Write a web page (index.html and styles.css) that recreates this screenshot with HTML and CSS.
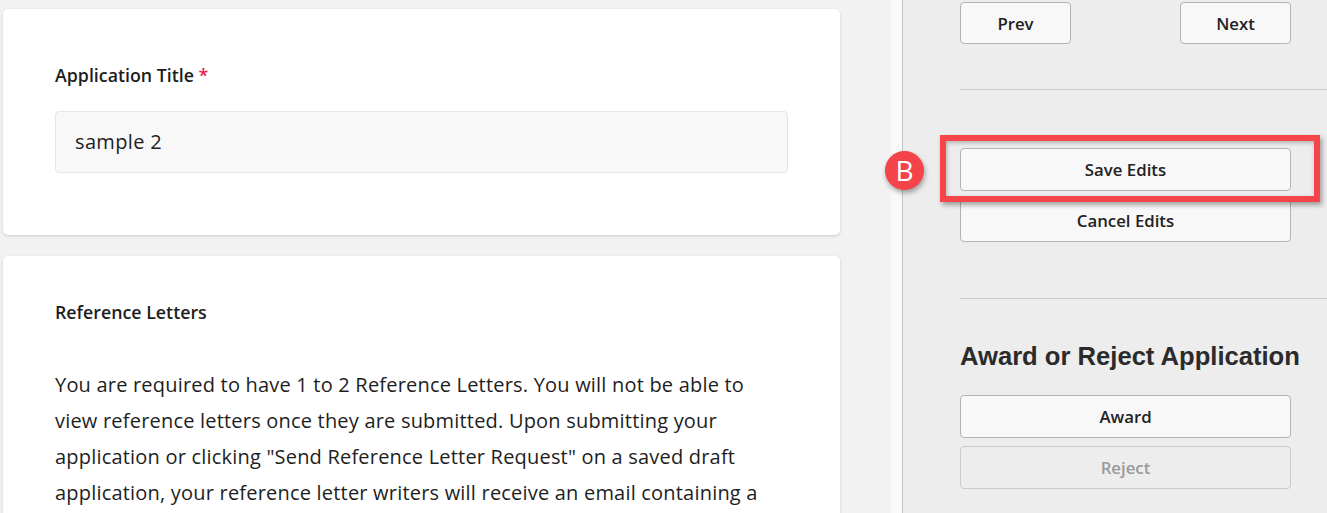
FILE: index.html
```html
<!DOCTYPE html>
<html lang="en">
<head>
<meta charset="utf-8">
<title>Application</title>
<link rel="stylesheet" href="styles.css">
</head>
<body>
<div class="page">
  <main class="main">
    <section class="card card-title">
      <label class="field-label">Application Title <span class="req">*</span></label>
      <div class="input">sample 2</div>
    </section>
    <section class="card card-refs">
      <h3 class="field-label">Reference Letters</h3>
      <p class="para">You are required to have 1 to 2 Reference Letters. You will not be able to view reference letters once they are submitted. Upon submitting your application or clicking "Send Reference Letter Request" on a saved draft application, your reference letter writers will receive an email containing a link to submit their letter.</p>
    </section>
  </main>
  <div class="strip"></div>
  <aside class="sidebar">
    <div class="nav-row">
      <button class="btn btn-small">Prev</button>
      <button class="btn btn-small">Next</button>
    </div>
    <hr class="rule rule-1">
    <div class="stack stack-edit">
      <div class="highlight-wrap">
        <button class="btn">Save Edits</button>
        <span class="callout-box"></span>
        <span class="badge">B</span>
      </div>
      <button class="btn">Cancel Edits</button>
    </div>
    <hr class="rule rule-2">
    <h2 class="side-heading">Award or Reject Application</h2>
    <div class="stack">
      <button class="btn">Award</button>
      <button class="btn btn-disabled">Reject</button>
    </div>
  </aside>
</div>
</body>
</html>
```
FILE: styles.css
```css
* { box-sizing: border-box; }
html, body { margin: 0; padding: 0; }
body {
  background: #f2f2f2;
  font-family: "Open Sans", "Liberation Sans", sans-serif;
  color: #222;
  overflow: hidden;
  height: 513px;
}
.page {
  display: flex;
  align-items: flex-start;
  height: 513px;
}
.main {
  width: 837px;
  margin-left: 3px;
  padding-top: 9px;
  flex: none;
  display: flex;
  flex-direction: column;
  gap: 21px;
}
.card {
  background: #fff;
  border-radius: 5px;
  box-shadow: 0 1px 3px rgba(0,0,0,0.16);
  padding: 0 52px;
}
.card-title { padding-top: 54px; padding-bottom: 62px; }
.card-refs { padding-top: 44px; padding-bottom: 40px; }
.field-label {
  display: block;
  margin: 0;
  font-size: 17.8px;
  line-height: 24px;
  font-weight: 600;
  color: #1d1d1d;
}
.req { color: #e31c4f; }
.input {
  margin-top: 24px;
  height: 62px;
  background: #f8f8f8;
  border: 1px solid #e6e6e6;
  border-radius: 4px;
  display: flex;
  align-items: center;
  padding-left: 19px;
  font-size: 20px;
  letter-spacing: 0.35px;
  line-height: 28px;
  color: #1e1e1e;
}
.para {
  margin: 43px 0 0;
  font-size: 20px;
  letter-spacing: 0.2px;
  line-height: 36px;
  color: #1e1e1e;
}
.strip {
  flex: none;
  width: 11px;
  height: 513px;
  margin-left: 51px;
  background: #f9f9f9;
}
.sidebar {
  flex: 1;
  height: 513px;
  background: #ededed;
  border-left: 1px solid #c4c4c4;
  padding-left: 57px;
  padding-top: 2px;
}
.btn {
  display: flex;
  align-items: center;
  justify-content: center;
  width: 331px;
  height: 43px;
  background: #f8f8f8;
  border: 1px solid #b3b3b3;
  border-radius: 4px;
  font-family: "Open Sans", "Liberation Sans", sans-serif;
  font-size: 16.8px;
  font-weight: 600;
  color: #222;
  padding: 0;
}
.btn-small { width: 111px; height: 42px; }
.btn-disabled { background: #ededed; color: #999; border-color: #cacaca; }
.nav-row {
  display: flex;
  justify-content: space-between;
  width: 331px;
}
.rule {
  border: 0;
  border-top: 1px solid #c8c8c8;
  margin: 0;
}
.rule-1 { margin-top: 45px; }
.rule-2 { margin-top: 56px; }
.stack {
  display: flex;
  flex-direction: column;
  gap: 8px;
}
.stack-edit { margin-top: 58px; }
.highlight-wrap { position: relative; width: 331px; }
.callout-box {
  position: absolute;
  left: -20px;
  top: -13px;
  width: 380px;
  height: 67px;
  border: 6px solid #f6454a;
  box-shadow: 2px 3px 5px rgba(0,0,0,0.35), inset 1px 2px 4px rgba(0,0,0,0.25);
  pointer-events: none;
}
.badge {
  position: absolute;
  left: -75px;
  top: 3px;
  width: 39px;
  height: 39px;
  border-radius: 50%;
  background: #f5434a;
  color: #fff;
  font-family: "Open Sans", "Liberation Sans", sans-serif;
  font-size: 28px;
  font-weight: 400;
  line-height: 39px;
  text-align: center;
  box-shadow: 1px 3px 5px rgba(0,0,0,0.35);
}
.side-heading {
  margin: 41px 0 23px;
  font-family: "Liberation Sans", Arial, sans-serif;
  font-size: 25.6px;
  line-height: 32px;
  font-weight: 700;
  color: #2b2b2b;
  white-space: nowrap;
}
```
